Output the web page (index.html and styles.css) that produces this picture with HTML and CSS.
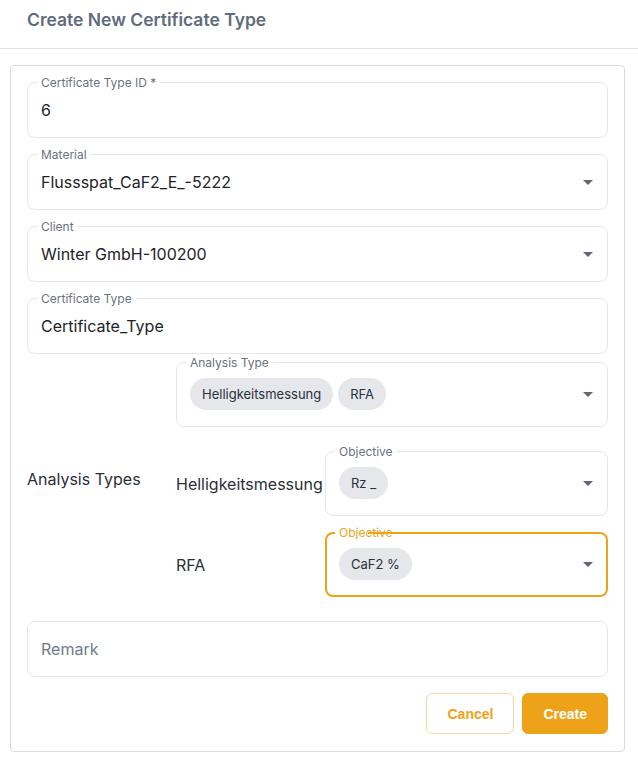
FILE: index.html
```html
<!DOCTYPE html>
<html lang="en">
<head>
<meta charset="utf-8">
<title>Create New Certificate Type</title>
<link rel="stylesheet" href="styles.css">
</head>
<body>
<header class="dialog-header">
  <h2 class="dialog-title">Create New Certificate Type</h2>
</header>
<form class="card">
  <div class="fields">
    <fieldset class="field">
      <legend class="field-label">Certificate Type ID *</legend>
      <div class="field-row"><span class="field-value">6</span></div>
    </fieldset>
    <fieldset class="field">
      <legend class="field-label">Material</legend>
      <div class="field-row"><span class="field-value">Flussspat_CaF2_E_-5222</span>
        <svg class="arrow" viewBox="0 0 24 24" width="24" height="24"><path d="M7 10l5 5 5-5z"/></svg></div>
    </fieldset>
    <fieldset class="field">
      <legend class="field-label">Client</legend>
      <div class="field-row"><span class="field-value">Winter GmbH-100200</span>
        <svg class="arrow" viewBox="0 0 24 24" width="24" height="24"><path d="M7 10l5 5 5-5z"/></svg></div>
    </fieldset>
    <fieldset class="field">
      <legend class="field-label">Certificate Type</legend>
      <div class="field-row"><span class="field-value">Certificate_Type</span></div>
    </fieldset>
  </div>

  <div class="analysis">
    <div class="analysis-title">Analysis Types</div>
    <fieldset class="field chip-field analysis-type">
      <legend class="field-label">Analysis Type</legend>
      <div class="chip-row">
        <span class="chip">Helligkeitsmessung</span>
        <span class="chip">RFA</span>
        <svg class="arrow" viewBox="0 0 24 24" width="24" height="24"><path d="M7 10l5 5 5-5z"/></svg>
      </div>
    </fieldset>

    <div class="sub-label row-2">Helligkeitsmessung</div>
    <fieldset class="field chip-field objective row-2">
      <legend class="field-label">Objective</legend>
      <div class="chip-row">
        <span class="chip">Rz _</span>
        <svg class="arrow" viewBox="0 0 24 24" width="24" height="24"><path d="M7 10l5 5 5-5z"/></svg>
      </div>
    </fieldset>

    <div class="sub-label row-3">RFA</div>
    <fieldset class="field chip-field objective focused row-3">
      <legend class="field-label">Objective</legend>
      <div class="chip-row">
        <span class="chip">CaF2 %</span>
        <svg class="arrow" viewBox="0 0 24 24" width="24" height="24"><path d="M7 10l5 5 5-5z"/></svg>
      </div>
    </fieldset>
  </div>

  <div class="remark"><span class="placeholder">Remark</span></div>

  <div class="actions">
    <button type="button" class="btn btn-outline">Cancel</button>
    <button type="button" class="btn btn-primary">Create</button>
  </div>
</form>
</body>
</html>
```
FILE: styles.css
```css
* { box-sizing: border-box; }

html, body {
  margin: 0;
  padding: 0;
  background: #ffffff;
}

body {
  font-family: Inter, "Noto Sans", sans-serif;
  color: #1f2328;
  width: 638px;
}

.dialog-header {
  height: 49px;
  padding: 8px 27px 0;
  border-bottom: 1px solid #e2e4e9;
}

.dialog-title {
  margin: 0;
  font-size: 17.5px;
  line-height: 24px;
  font-weight: 600;
  color: #616b7c;
}

.card {
  margin: 16px 13px 0 10px;
  border: 1px solid #d9dbe0;
  border-radius: 4px;
  padding: 9px 16px 17px;
  display: flex;
  flex-direction: column;
}

.fields {
  display: flex;
  flex-direction: column;
  gap: 9px;
}

.field {
  margin: 0;
  min-width: 0;
  border: 1px solid #e4e6eb;
  border-radius: 8px;
  padding: 8px 7px 15px 13px;
}

.field-label {
  margin-left: -4px;
  padding: 0 4px;
  font-size: 12px;
  line-height: 15px;
  color: #6b7280;
  white-space: nowrap;
}

.field-row {
  display: flex;
  align-items: center;
  height: 24px;
}

.field-value {
  flex: 1;
  font-size: 16px;
  line-height: 24px;
  color: #1f2328;
}

.arrow {
  flex: none;
  margin-left: auto;
  fill: #5f6571;
}

.chip-field {
  padding-bottom: 16px;
}

.chip-row {
  display: flex;
  align-items: center;
  gap: 5px;
  height: 32px;
}

.chip {
  height: 32px;
  line-height: 32px;
  padding: 0 12px;
  border-radius: 16px;
  background: #e5e7eb;
  font-size: 13px;
  color: #2b303a;
  white-space: nowrap;
}

.analysis {
  margin-top: 1px;
  display: grid;
  grid-template-columns: 149px 149px 1fr;
  row-gap: 9px;
}

.analysis-title {
  grid-column: 1;
  grid-row: 1 / 4;
  align-self: center;
  padding-top: 6px;
  font-size: 16px;
  line-height: 24px;
  color: #2b2f36;
}

.analysis-type {
  grid-column: 2 / 4;
  grid-row: 1;
  margin-bottom: 8px;
}

.sub-label {
  grid-column: 2;
  align-self: center;
  padding-top: 7px;
  font-size: 16px;
  line-height: 24px;
  color: #2b2f36;
  white-space: nowrap;
}

.objective {
  grid-column: 3;
}

.row-2 { grid-row: 2; }
.row-3 { grid-row: 3; }

.focused {
  border: 2px solid #eda21a;
  padding: 7px 6px 15px 12px;
}

.focused .field-label {
  color: #eda21a;
  line-height: 16px;
  width: 33px;
  padding-right: 0;
  overflow: visible;
}

.remark {
  margin-top: 24px;
  height: 56px;
  border: 1px solid #e4e6eb;
  border-radius: 8px;
  padding-left: 13px;
  display: flex;
  align-items: center;
}

.placeholder {
  font-size: 16px;
  color: #6f7a8c;
}

.actions {
  margin-top: 16px;
  display: flex;
  justify-content: flex-end;
  gap: 8px;
}

.btn {
  height: 41px;
  padding: 0 20px;
  border-radius: 6px;
  font-family: "Liberation Sans", Arial, sans-serif;
  font-size: 14px;
  font-weight: 700;
  cursor: pointer;
}

.btn-outline {
  background: #ffffff;
  border: 1px solid #f6d89f;
  color: #eda21a;
}

.btn-primary {
  background: #eda21a;
  border: 1px solid #eda21a;
  color: #ffffff;
}
```
